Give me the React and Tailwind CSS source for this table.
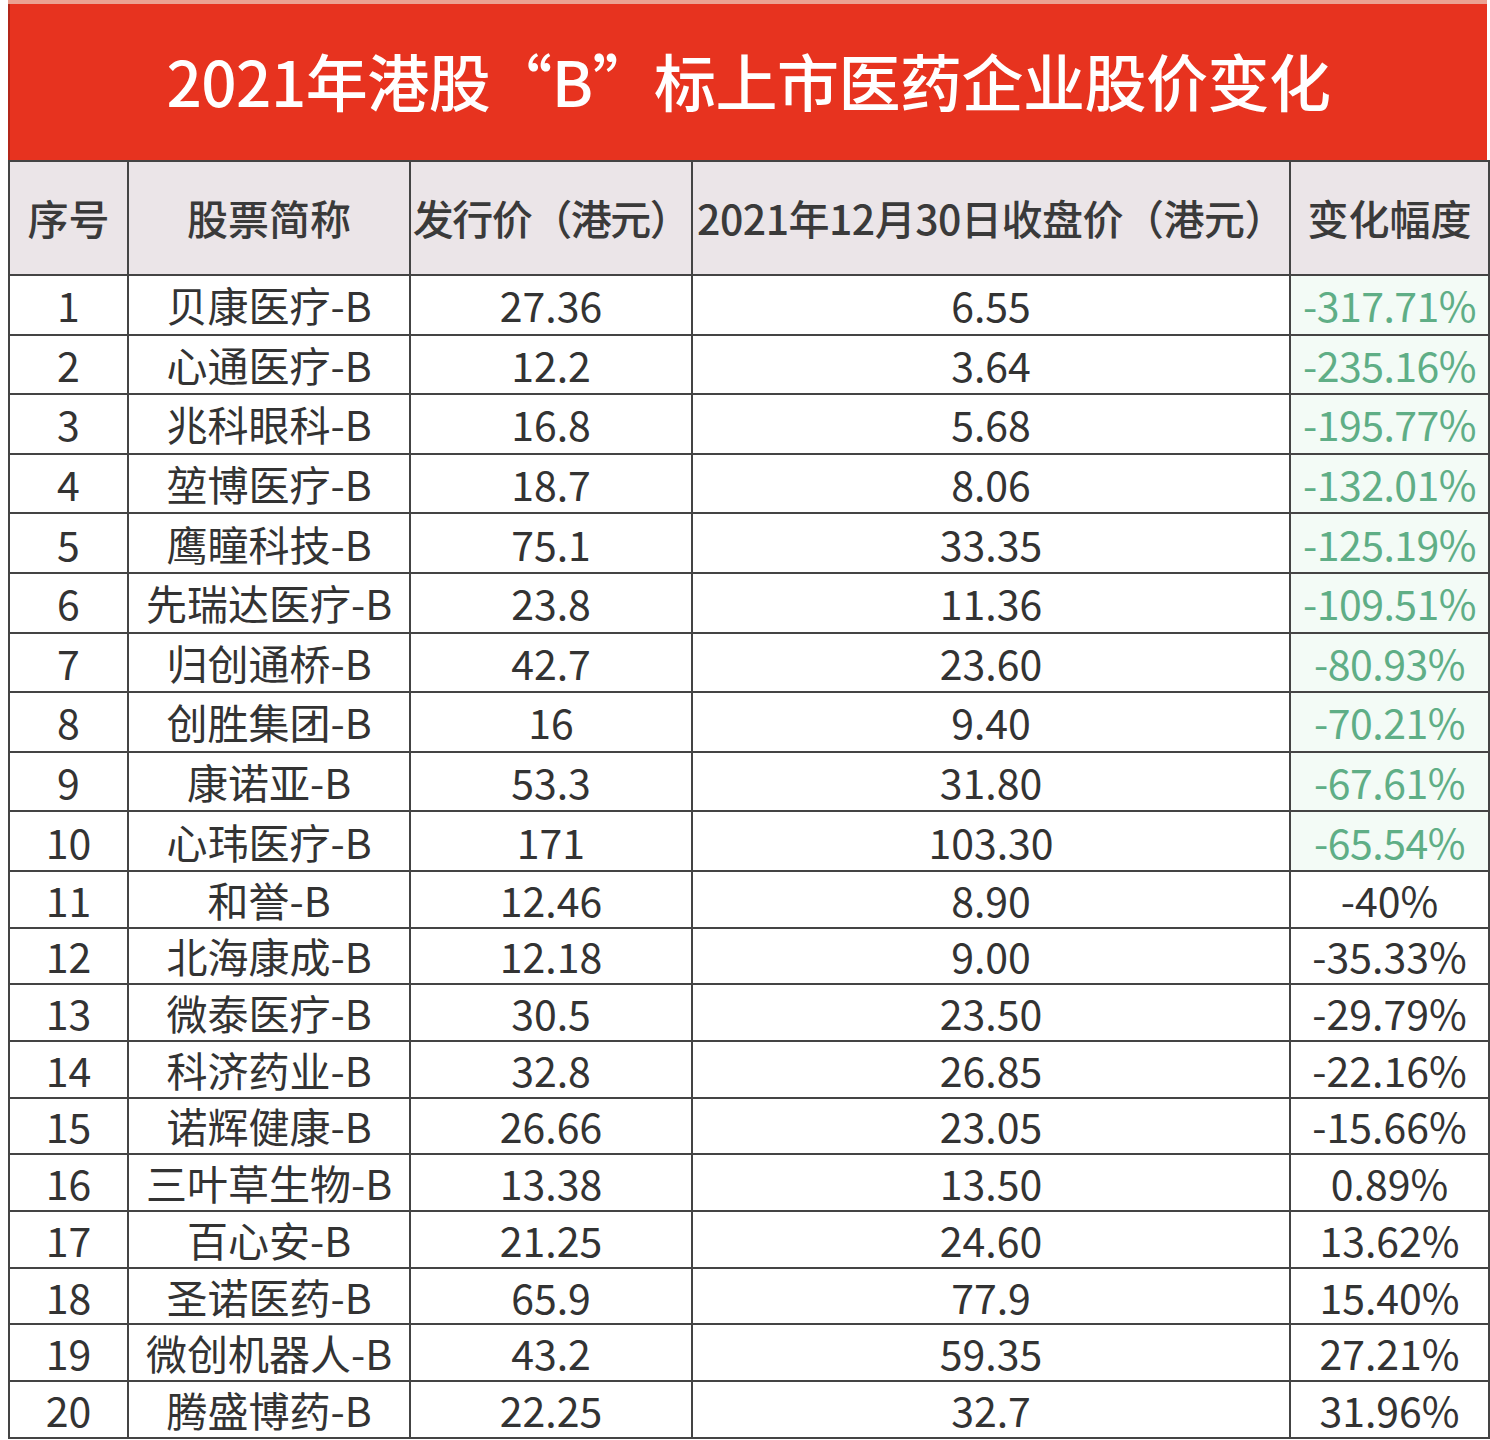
import React from 'react';

const rows = [
  ['1', '贝康医疗-B', '27.36', '6.55', '-317.71%'],
  ['2', '心通医疗-B', '12.2', '3.64', '-235.16%'],
  ['3', '兆科眼科-B', '16.8', '5.68', '-195.77%'],
  ['4', '堃博医疗-B', '18.7', '8.06', '-132.01%'],
  ['5', '鹰瞳科技-B', '75.1', '33.35', '-125.19%'],
  ['6', '先瑞达医疗-B', '23.8', '11.36', '-109.51%'],
  ['7', '归创通桥-B', '42.7', '23.60', '-80.93%'],
  ['8', '创胜集团-B', '16', '9.40', '-70.21%'],
  ['9', '康诺亚-B', '53.3', '31.80', '-67.61%'],
  ['10', '心玮医疗-B', '171', '103.30', '-65.54%'],
  ['11', '和誉-B', '12.46', '8.90', '-40%'],
  ['12', '北海康成-B', '12.18', '9.00', '-35.33%'],
  ['13', '微泰医疗-B', '30.5', '23.50', '-29.79%'],
  ['14', '科济药业-B', '32.8', '26.85', '-22.16%'],
  ['15', '诺辉健康-B', '26.66', '23.05', '-15.66%'],
  ['16', '三叶草生物-B', '13.38', '13.50', '0.89%'],
  ['17', '百心安-B', '21.25', '24.60', '13.62%'],
  ['18', '圣诺医药-B', '65.9', '77.9', '15.40%'],
  ['19', '微创机器人-B', '43.2', '59.35', '27.21%'],
  ['20', '腾盛博药-B', '22.25', '32.7', '31.96%'],
];

const cell = 'border-2 border-[#444444] text-center p-0 whitespace-nowrap';

export default function App() {
  return (
    <div className="w-[1490px] h-[1440px] bg-white overflow-hidden font-['Noto_Sans_CJK_SC','Noto_Sans',sans-serif] text-[#333333]">
      <div className="h-[4px] ml-[8px] mr-[3px] bg-[#eba292]" />
      <div className="h-[156px] ml-[8px] mr-[3px] bg-[#e7331f] border-l-2 border-[#b3261a] flex items-center justify-center">
        <h1 className="text-[62px] font-medium text-white leading-[1.2] tracking-[-0.5px] -mt-[4px]">
          2021年港股“B”标上市医药企业股价变化
        </h1>
      </div>
      <div className="pl-[8px] pr-[2px]">
        <table className="w-full border-collapse table-fixed">
          <colgroup>
            <col className="w-[119px]" />
            <col className="w-[282px]" />
            <col className="w-[282px]" />
            <col className="w-[598px]" />
            <col className="w-[199px]" />
          </colgroup>
          <thead>
            <tr className="h-[114px] bg-[#ebe5e8] text-[41px] leading-[1.2] text-[#3a3a3a]">
              <th className={cell + ' font-medium'}>序号</th>
              <th className={cell + ' font-medium'}>股票简称</th>
              <th className={cell + ' font-medium'}>
                <span className="tracking-[-1.5px]">发行价（港元）</span>
              </th>
              <th className={cell + ' font-medium'}>
                <span className="tracking-[-0.5px]">2021年12月30日收盘价（港元）</span>
              </th>
              <th className={cell + ' font-medium'}>变化幅度</th>
            </tr>
          </thead>
          <tbody className="text-[41px] leading-[1.2]">
            {rows.map((r, i) => {
              const top = i < 10;
              return (
                <tr key={r[0]} className={top ? 'h-[59.6px]' : 'h-[56.7px]'}>
                  <td className={cell}>{r[0]}</td>
                  <td className={cell}>{r[1]}</td>
                  <td className={cell}>{r[2]}</td>
                  <td className={cell}>{r[3]}</td>
                  <td className={cell + (top ? ' bg-[#f3fbf6] text-[#5fae86] tracking-[-0.5px]' : '')}>
                    {r[4]}
                  </td>
                </tr>
              );
            })}
          </tbody>
        </table>
      </div>
    </div>
  );
}
